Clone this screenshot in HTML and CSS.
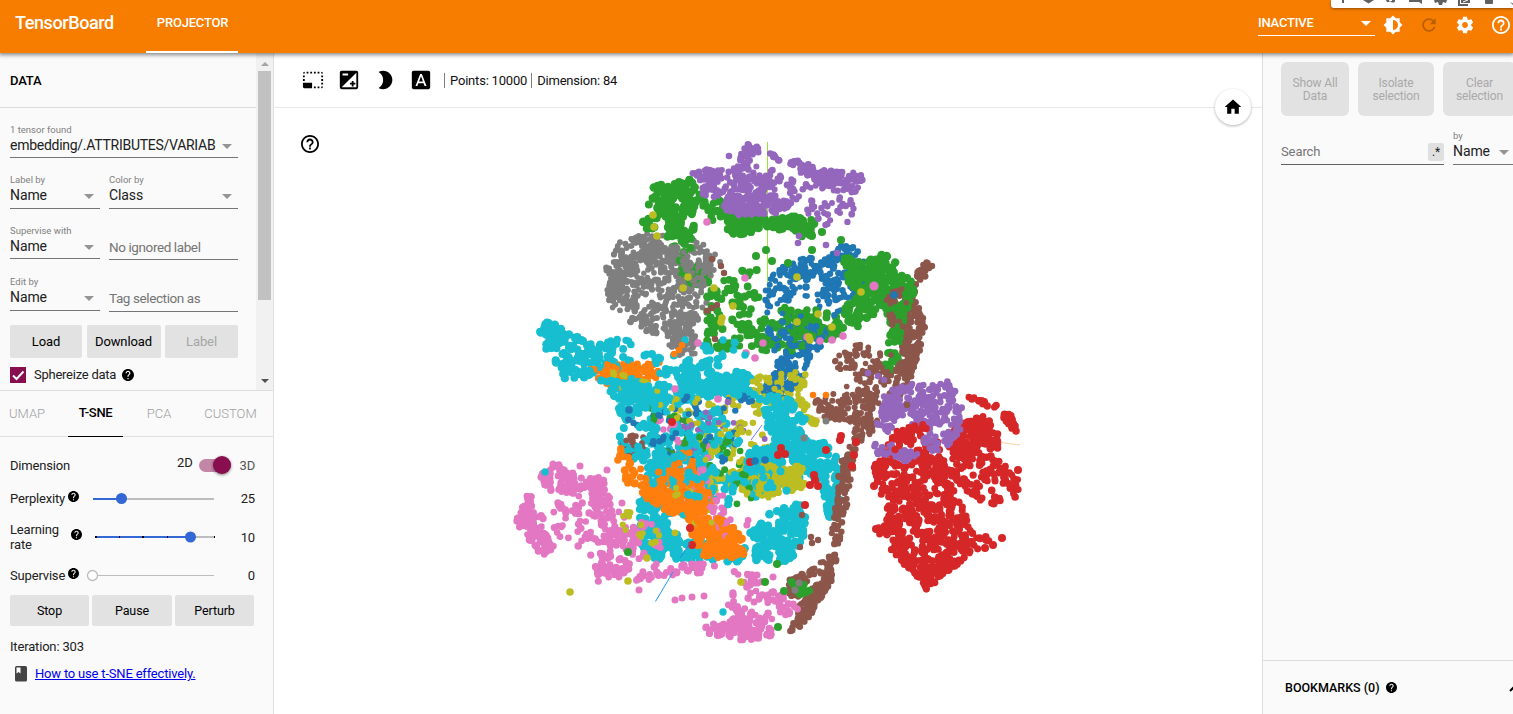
FILE: index.html
```html
<!DOCTYPE html>
<html lang="en">
<head>
<meta charset="utf-8">
<title>TensorBoard</title>
<link rel="stylesheet" href="styles.css">
</head>
<body>
<svg class="defs" width="0" height="0">
  <symbol id="help" viewBox="2 2 20 20"><path d="M12 2C6.48 2 2 6.48 2 12s4.48 10 10 10 10-4.48 10-10S17.52 2 12 2zm1 17h-2v-2h2v2zm2.07-7.75l-.9.92C13.45 12.9 13 13.5 13 15h-2v-.5c0-1.1.45-2.1 1.17-2.83l1.24-1.26c.37-.36.59-.86.59-1.41 0-1.1-.9-2-2-2s-2 .9-2 2H8c0-2.21 1.79-4 4-4s4 1.79 4 4c0 .88-.36 1.68-.93 2.25z"/></symbol>
  <symbol id="help-outline" viewBox="2 2 20 20"><path d="M11 18h2v-2h-2v2zm1-16C6.48 2 2 6.48 2 12s4.48 10 10 10 10-4.48 10-10S17.52 2 12 2zm0 18c-4.41 0-8-3.59-8-8s3.59-8 8-8 8 3.59 8 8-3.59 8-8 8zm0-14c-2.21 0-4 1.79-4 4h2c0-1.1.9-2 2-2s2 .9 2 2c0 2-3 1.75-3 5h2c0-2.25 3-2.5 3-5 0-2.21-1.79-4-4-4z"/></symbol>
</svg>
<header class="topbar">
  <div class="brand">TensorBoard</div>
  <div class="plugin">PROJECTOR</div>
  <div class="status"><span>INACTIVE</span><i class="caret"></i></div>
  <svg class="tb-icon" viewBox="0 0 24 24"><path d="M20 15.31L23.31 12 20 8.69V4h-4.69L12 .69 8.69 4H4v4.69L.69 12 4 15.31V20h4.69L12 23.31 15.31 20H20v-4.69zM12 18V6c3.31 0 6 2.69 6 6s-2.69 6-6 6z"/></svg>
  <svg class="tb-icon dim" viewBox="0 0 24 24"><path d="M17.65 6.35C16.2 4.9 14.21 4 12 4c-4.42 0-7.99 3.58-7.99 8s3.57 8 7.99 8c3.73 0 6.84-2.55 7.73-6h-2.08c-.82 2.33-3.04 4-5.65 4-3.31 0-6-2.69-6-6s2.69-6 6-6c1.66 0 3.14.69 4.22 1.78L13 11h7V4l-2.35 2.35z"/></svg>
  <svg class="tb-icon" viewBox="0 0 24 24"><path d="M19.43 12.98c.04-.32.07-.64.07-.98s-.03-.66-.07-.98l2.11-1.65c.19-.15.24-.42.12-.64l-2-3.46c-.12-.22-.39-.3-.61-.22l-2.49 1c-.52-.4-1.08-.73-1.69-.98l-.38-2.65C14.46 2.18 14.25 2 14 2h-4c-.25 0-.46.18-.49.42l-.38 2.65c-.61.25-1.17.59-1.69.98l-2.49-1c-.23-.09-.49 0-.61.22l-2 3.46c-.13.22-.07.49.12.64l2.11 1.65c-.04.32-.07.65-.07.98s.03.66.07.98l-2.11 1.65c-.19.15-.24.42-.12.64l2 3.46c.12.22.39.3.61.22l2.49-1c.52.4 1.08.73 1.69.98l.38 2.65c.03.24.24.42.49.42h4c.25 0 .46-.18.49-.42l.38-2.65c.61-.25 1.17-.59 1.69-.98l2.49 1c.23.09.49 0 .61-.22l2-3.46c.12-.22.07-.49-.12-.64l-2.11-1.65zM12 15.5c-1.93 0-3.5-1.57-3.5-3.5s1.57-3.5 3.5-3.5 3.5 1.57 3.5 3.5-1.57 3.5-3.5 3.5z"/></svg>
  <svg class="tb-icon help-top"><use href="#help-outline"/></svg>
</header>
<div class="popup"><svg width="182" height="8" fill="#606060">
  <path d="M11 0h2v3h-2zM32 0h11l-5.500 3.500zM55 0h3c0 1 1 1.500 2 1h1V0h3v1c0 2-4 2-5 0-1 2-4 1-4-1zM78 0h13v4l-3-2H78zM103 0h13l-1 3-3-1-1 3h-3l-1-3-3 1zM127 0h2v4h8v2h-10zM130 0h9v3h-9zM154 0h8v3q0 1-1 1h-6q-1 0-1-1z"/><path d="M132 2l5-2M181 4l2-2" stroke="#fff"/><path d="M179 2l4 2v2z"/></svg></div>
<main class="layout">
  <aside class="left">
    <section class="data">
      <div class="data-body">
        <h2>DATA</h2>
        <div class="fields">
          <div class="field r1"><label>1 tensor found</label><div class="value">embedding/.ATTRIBUTES/VARIAB<i class="caret"></i></div></div>
          <div class="pair r2">
            <div class="field"><label>Label by</label><div class="value">Name<i class="caret"></i></div></div>
            <div class="field wide"><label>Color by</label><div class="value">Class<i class="caret"></i></div></div>
          </div>
          <div class="pair r3">
            <div class="field"><label>Supervise with</label><div class="value">Name<i class="caret"></i></div></div>
            <div class="input">No ignored label</div>
          </div>
          <div class="pair r4">
            <div class="field"><label>Edit by</label><div class="value">Name<i class="caret"></i></div></div>
            <div class="input">Tag selection as</div>
          </div>
          <div class="buttons3"><div class="btn">Load</div><div class="btn">Download</div><div class="btn off">Label</div></div>
          <div class="check"><span class="box"><svg width="16" height="16"><path d="M3 8.500l3.500 3.500L13.500 4.500" fill="none" stroke="#fff" stroke-width="2"/></svg></span><span>Sphereize data</span><svg class="q"><use href="#help"/></svg></div>
        </div>
      </div>
      <div class="scrollbar"><i class="up"></i><div class="thumb"></div><i class="down"></i></div>
    </section>
    <nav class="tabs"><span class="t1">UMAP</span><span class="t2 on">T-SNE</span><span class="t3">PCA</span><span class="t4">CUSTOM</span></nav>
    <section class="tsne">
      <div class="row dim-row"><span class="name">Dimension</span><span class="d2">2D</span><span class="toggle"></span><span class="d3">3D</span></div>
      <div class="row r-perp"><span class="name">Perplexity</span><svg class="q"><use href="#help"/></svg>
        <svg class="slider" width="140" height="14"><path d="M10 8h121" stroke="#bdbdbd" stroke-width="2"/><path d="M10 8h28" stroke="#3367d6" stroke-width="2"/><circle cx="38.500" cy="7.500" r="5.500" fill="#3367d6"/></svg><b>25</b></div>
      <div class="row r-learn"><span class="name two">Learning<br>rate</span><svg class="q"><use href="#help"/></svg>
        <svg class="slider" width="140" height="14"><path d="M12 7h120" stroke="#bdbdbd" stroke-width="2"/><path d="M12 7h95" stroke="#3367d6" stroke-width="2"/><path d="M12 7h2M36 7h1M59 7h2M84 7h1M131 7h1" stroke="#000" stroke-width="2"/><circle cx="107.500" cy="7" r="5.500" fill="#3367d6"/></svg><b>10</b></div>
      <div class="row r-sup"><span class="name">Supervise</span><svg class="q"><use href="#help"/></svg>
        <svg class="slider" width="140" height="14"><path d="M10 7.500h121" stroke="#bdbdbd"/><circle cx="9.500" cy="7.500" r="5" fill="#fff" stroke="#bdbdbd" stroke-width="1.300"/></svg><b>0</b></div>
      <div class="run"><div class="btn">Stop</div><div class="btn">Pause</div><div class="btn">Perturb</div></div>
      <p class="iter">Iteration: 303</p>
      <div class="link"><svg width="12" height="16"><path fill="#444" d="M1.500 0h9Q12 0 12 1.500v12.500q0 1.500-1.500 1.500h-9Q0 15.500 0 14V1.500Q0 0 1.500 0z"/><path fill="#fff" d="M1.500 1.500h4v6l-2-1.500-2 1.500z"/></svg><a href="#">How to use t-SNE effectively.</a></div>
    </section>
  </aside>
  <section class="center">
    <div class="tools">
      <svg viewBox="0 0 24 24"><path d="M23 15h-2v2h2v-2zm0-4h-2v2h2v-2zm0 8h-2v2c1 0 2-1 2-2zM15 3h-2v2h2V3zm8 4h-2v2h2V7zm-2-4v2h2c0-1-1-2-2-2zM3 21h8v-6H1v4c0 1.100.9 2 2 2zM3 7H1v2h2V7zm12 12h-2v2h2v-2zm4-16h-2v2h2V3zm0 16h-2v2h2v-2zM3 3C2 3 1 4 1 5h2V3zm0 8H1v2h2v-2zm8-8H9v2h2V3zM7 3H5v2h2V3z"/></svg>
      <svg viewBox="0 0 24 24"><path d="M15 17v2h2v-2h2v-2h-2v-2h-2v2h-2v2h2zm5-15H4c-1.100 0-2 .9-2 2v16c0 1.100.9 2 2 2h16c1.100 0 2-.9 2-2V4c0-1.100-.9-2-2-2zM5 5h6v2H5V5zm15 15H4L20 4v16z"/></svg>
      <svg viewBox="0 0 24 24"><path d="M10 2c-1.820 0-3.530.5-5 1.350C7.990 5.080 10 8.300 10 12s-2.010 6.920-5 8.650C6.470 21.500 8.180 22 10 22c5.520 0 10-4.480 10-10S15.520 2 10 2z"/></svg>
      <svg viewBox="0 0 24 24"><path d="M9.930 13.500h4.140L12 7.980zM20 2H4c-1.100 0-2 .9-2 2v16c0 1.100.9 2 2 2h16c1.100 0 2-.9 2-2V4c0-1.100-.9-2-2-2zm-4.050 16.500l-1.140-3H9.170l-1.120 3H5.960l5.110-13h1.860l5.110 13h-2.090z"/></svg>
      <span class="stat">Points: 10000</span><span class="stat s2">Dimension: 84</span>
    </div>
    <div class="stage">
      <canvas id="plot" width="988" height="606"></canvas>
      <svg class="stage-help"><use href="#help-outline"/></svg>
      <div class="home"><svg width="20" height="20" viewBox="0 0 24 24"><path d="M10 20v-6h4v6h5v-8h3L12 3 2 12h3v8z"/></svg></div>
    </div>
  </section>
  <aside class="right">
    <div class="actions"><div class="act a1">Show All<br>Data</div><div class="act a2">Isolate<br>selection</div><div class="act a3">Clear<br>selection</div></div>
    <div class="search"><div class="query"><span>Search</span><span class="regex">.*</span></div><div class="field by"><label>by</label><div class="value">Name<i class="caret"></i></div></div></div>
    <div class="bookmarks"><span>BOOKMARKS (0)</span><svg class="q"><use href="#help"/></svg><svg class="chev" width="12" height="8"><path d="M1 7l5-5 5 5" fill="none" stroke="#000" stroke-width="2"/></svg></div>
  </aside>
</main>
<script src="plot.js"></script>
</body>
</html>
```
FILE: styles.css
```css
* { box-sizing: border-box; }
body { margin: 0; width: 1513px; height: 714px; overflow: hidden; font: 13px/16px Roboto, sans-serif; letter-spacing: -.1px; color: #212121; background: #fff; position: relative; }
.defs { position: absolute; }
h2, p { margin: 0; }
svg { flex: none; display: block; }
.topbar { height: 53px; background: #f77d00; color: #fff; display: flex; align-items: center; position: relative; z-index: 2; box-shadow: 0 1px 4px 1px rgba(0,0,0,.45); padding-left: 15px; }
.brand { font-size: 18px; font-weight: 500; letter-spacing: -.4px; width: 131px; padding-bottom: 7px; line-height: 20px; }
.plugin { width: 92px; height: 53px; border-bottom: 2px solid #fff; text-align: center; font-weight: 500; font-size: 13px; letter-spacing: -.2px; line-height: 46px; padding-left: 1px; }
.status { margin-left: 1020px; width: 117px; height: 24px; margin-top: -5px; border-bottom: 1px solid #fff; display: flex; justify-content: space-between; align-items: center; font-weight: 500; font-size: 13px; letter-spacing: -.2px; padding: 0 4px 2px 0; }
.caret { border: 5px solid transparent; border-top-color: #959595; border-bottom: 0; width: 0; height: 0; }
.status .caret { border-top-color: #fff; margin-top: 2px; }
.tb-icon { width: 20px; height: 20px; fill: #fff; margin: -4px 8px 0 7.500px; }
.tb-icon + .tb-icon { margin-left: 8px; }
.tb-icon.dim { fill: #b85e00; }
.topbar .help-top { width: 18px; height: 18px; margin-left: 9px; margin-right: 0; }
.popup { position: absolute; z-index: 3; right: 0; top: 0; width: 182px; height: 8px; background: #fff; border-radius: 0 0 0 3px; box-shadow: 0 1px 3px rgba(0,0,0,.4); }
.layout { display: flex; height: 661px; }
.left { width: 274px; background: #fafafa; border-right: 1px solid #e0e0e0; display: flex; flex-direction: column; }
.data { height: 338px; border-bottom: 1px solid #ddd; display: flex; }
.data-body { width: 256px; overflow: hidden; }
h2 { height: 55px; border-bottom: 1px solid #ddd; padding: 1px 0 0 10px; font-size: 13px; font-weight: 500; line-height: 54px; color: #000; letter-spacing: -.2px; }
.fields { padding: 16px 18px 0 10px; }
.field { border-bottom: 1px solid #757575; }
.field label { display: block; font-size: 9.500px; line-height: 12px; color: #808080; white-space: nowrap; letter-spacing: 0; }
.field .value { display: flex; justify-content: space-between; align-items: center; font-size: 14px; line-height: 18px; height: 19px; padding: 0 6px 2px 0; white-space: nowrap; }
.value .caret { margin-top: 3px; }
.r1 { height: 34px; }
.r1 .value { letter-spacing: -.27px; }
.pair { display: flex; gap: 9px; align-items: flex-start; }
.pair .field { width: 90px; }
.pair .wide { width: 129px; }
.r2 { margin-top: 16px; } .r2 .field { height: 35px; }
.r3 { margin-top: 16px; } .r3 .field { height: 34px; }
.r4 { margin-top: 16px; } .r4 .field { height: 35px; }
.input { width: 129px; height: 35px; border-bottom: 1px solid #757575; color: #757575; font-size: 13.500px; letter-spacing: -.4px; padding-top: 14px; }
.r4 .input { height: 36px; }
.btn { background: #e2e2e2; border-radius: 2px; color: #000; text-align: center; font-size: 13px; }
.buttons3 { display: grid; grid-template-columns: 72px 74px 73px; column-gap: 4.500px; margin-top: 13px; }
.buttons3 .btn { height: 33px; line-height: 33px; }
.btn.off { color: #a6a6a6; }
.check { display: flex; align-items: center; margin-top: 9px; height: 16px; white-space: nowrap; letter-spacing: -.25px; }
.box { width: 16px; height: 16px; background: #880e4f; margin-right: 8px; }
.q { width: 11px; height: 11px; fill: #000; }
.check .q { width: 12px; height: 12px; margin-left: 6px; }
.scrollbar { width: 17px; background: #f1f1f1; padding: 9px 2px 0; display: flex; flex-direction: column; align-items: center; }
.up { border: 4px solid transparent; border-top: 0; border-bottom-color: #a3a3a3; }
.thumb { width: 13px; height: 229px; background: #c1c1c1; margin: 5px 0 79px; }
.down { border: 4px solid transparent; border-bottom: 0; border-top-color: #505050; }
.tabs { height: 46px; border-bottom: 1px solid #e0e0e0; display: flex; line-height: 45px; color: #a0a0a0; font-weight: 300; letter-spacing: 0; }
.tabs span { text-align: center; }
.t1 { width: 54px; } .t2 { width: 55px; margin-left: 14px; } .t3 { width: 72px; } .t4 { width: 71px; }
.tabs .on { height: 46px; color: #000; font-weight: 500; border-bottom: 1px solid #000; letter-spacing: -.3px; line-height: 44px; }
.tsne { padding: 12px 18px 0 10px; }
.row { display: flex; align-items: center; letter-spacing: -.17px; }
.row b { font-weight: 400; margin-left: auto; padding-top: 1px; }
.dim-row { height: 33px; }
.dim-row .name { width: 60px; }
.d2 { margin-left: 107px; padding-bottom: 6px; width: 15px; }
.toggle { width: 32px; height: 13px; background: #c486a6; border-radius: 7px; margin-left: 7px; position: relative; }
.toggle::after { content: ""; position: absolute; right: 0; top: -3px; width: 18px; height: 18px; border-radius: 50%; background: #880e4f; box-shadow: 0 1px 3px rgba(0,0,0,.5); }
.d3 { margin-left: auto; color: #555; }
.r-perp { height: 32px; } .r-perp .q, .r-sup .q { margin: -3px 0 0 3px; }
.r-perp .name, .r-sup .name { width: 55px; padding-top: 1px; }
.slider { margin-left: 4px; }
.r-learn { height: 45px; } .r-learn .name { width: 61px; line-height: 15px; } .r-learn .q { margin-top: -4px; } .r-learn .slider { margin-left: 1px; }
.r-learn b { padding-top: 2px; }
.r-sup { height: 32px; }
.run { display: grid; grid-template-columns: 79px 80px 79px; column-gap: 3px; margin-top: 4px; }
.run .btn { height: 31px; line-height: 31px; font-size: 12.500px; }
.iter { margin-top: 13px; letter-spacing: -.17px; }
.link { display: flex; align-items: center; gap: 8px; margin: 11px 0 0 5px; height: 16px; }
a { color: #00e; white-space: nowrap; letter-spacing: -.19px; }
.center { width: 988px; display: flex; flex-direction: column; }
.tools { height: 55px; border-bottom: 1px solid #e8e8e8; display: flex; align-items: center; padding: 0 0 0 28px; }
.tools svg { width: 22px; height: 22px; margin-right: 14px; }
.stat { border-left: 1px solid #808080; line-height: 14px; padding: 1px 0 0 5px; letter-spacing: -.2px; margin-left: -2px; color: #111; white-space: nowrap; }
.tools .s2 { margin-left: 4px; }
.stage { flex: 1; position: relative; }
.stage canvas { display: block; }
.stage-help { position: absolute; left: 27px; top: 27px; width: 18px; height: 18px; }
.home { position: absolute; right: 11px; top: -19px; width: 36px; height: 36px; border-radius: 50%; background: #fff; box-shadow: 0 1px 3px rgba(0,0,0,.3); display: flex; align-items: center; justify-content: center; }
.right { width: 251px; border-left: 1px solid #ddd; background: #fafafa; display: flex; flex-direction: column; overflow: hidden; }
.actions { display: flex; gap: 9px; padding: 9px 0 0 18px; }
.act { flex: none; height: 54px; border-radius: 6px; background: #e2e2e2; color: #a9a9a9; font-size: 12px; line-height: 13px; text-align: center; padding-top: 15px; letter-spacing: -.15px; }
.a1 { width: 68px; } .a2 { width: 76px; } .a3 { width: 73px; }
.search { display: flex; align-items: flex-end; gap: 9px; margin: 12px 0 0 18px; height: 37px; }
.query { flex: none; width: 163px; height: 26px; border-bottom: 1px solid #616161; color: #757575; display: flex; justify-content: space-between; align-items: center; }
.regex { width: 16px; height: 18px; background: #e0e0e0; border-radius: 2px; color: #222; text-align: center; font-size: 12px; line-height: 18px; }
.by { width: 70px; height: 35px; flex: none; }
.by .value { padding-right: 14px; }
.bookmarks { margin-top: auto; height: 54px; border-top: 1px solid #ddd; display: flex; align-items: center; padding-left: 22px; font-size: 12.500px; color: #000; font-weight: 500; letter-spacing: 0; white-space: nowrap; }
.bookmarks span { flex: none; width: 95px; }
.bookmarks .q { margin-left: 6px; }
.chev { margin-left: 112px; }
```
FILE: plot.js
```js
const ctx = document.getElementById('plot').getContext('2d');
ctx.translate(-274, -108);
let seed = 8431;
function rnd() {
  seed = (seed * 1664525 + 1013904223) >>> 0;
  return seed / 4294967296;
}
const C = { p: '#9467bd', g: '#2ca02c', k: '#7f7f7f', b: '#1f77b4', t: '#8c564b', c: '#17becf', o: '#ff7f0e', m: '#e377c2', r: '#d62728', y: '#bcbd22' };
function inside(x, y, q) {
  let hit = false;
  for (let i = 0, j = q.length - 2; i < q.length; j = i, i += 2) {
    if ((q[i + 1] > y) !== (q[j + 1] > y) && x < (q[j] - q[i]) * (y - q[i + 1]) / (q[j + 1] - q[i + 1]) + q[i]) hit = !hit;
  }
  return hit;
}
function dot(c, x, y, r) {
  ctx.fillStyle = C[c];
  ctx.beginPath();
  ctx.arc(x, y, r, 0, 7);
  ctx.fill();
}
// Points scattered in a polygon, in short chains so that gaps stay between them.
function cloud(c, r, n, q) {
  const xs = q.filter((v, i) => i % 2 === 0), ys = q.filter((v, i) => i % 2);
  const x0 = Math.min(...xs), x1 = Math.max(...xs), y0 = Math.min(...ys), y1 = Math.max(...ys);
  const out = [];
  let guard = n * 60;
  while (out.length < n && guard-- > 0) {
    let x = x0 + rnd() * (x1 - x0), y = y0 + rnd() * (y1 - y0);
    if (!inside(x, y, q)) continue;
    const links = 1 + Math.floor(rnd() * 2.5);
    for (let k = 0; k < links && out.length < n; k++) {
      if (inside(x, y, q)) out.push([c, x, y, r * (0.9 + rnd() * 0.14)]);
      x += (rnd() - 0.5) * r * 3.2;
      y += (rnd() - 0.5) * r * 3.2;
    }
  }
  return out;
}
function paint(list) { list.forEach(d => dot(...d)); }
// Interleaves short runs of the overlapping clouds.
function mixed(defs) {
  const runs = [];
  defs.forEach(d => {
    const pts = cloud(...d);
    for (let i = 0; i < pts.length; i += 3) runs.push(pts.slice(i, i + 3));
  });
  for (let i = runs.length - 1; i > 0; i--) {
    const j = Math.floor(rnd() * (i + 1));
    [runs[i], runs[j]] = [runs[j], runs[i]];
  }
  runs.forEach(paint);
}
function line(color, x0, y0, x1, y1) {
  ctx.strokeStyle = color;
  ctx.lineWidth = 1;
  ctx.beginPath();
  ctx.moveTo(x0, y0);
  ctx.lineTo(x1, y1);
  ctx.stroke();
}
line('#9be53a', 767.5, 142, 767.5, 330);
line('#ffc0b4', 780, 412, 895, 429);
mixed([
  ['k', 3, 190, [640,234,665,231,662,255,635,275,616,300,607,298,605,270,618,243]],
  ['k', 3, 400, [640,250,680,245,695,270,690,300,702,320,680,332,650,334,622,322,606,300,615,275]],
  ['k', 3, 85, [680,236,700,238,722,262,716,278,700,290,714,300,704,312,690,312]],
  ['k', 3, 85, [660,325,690,320,697,338,697,355,680,358,665,342]],
  ['g', 4.2, 44, [665,235,685,232,693,260,705,265,712,282,692,285,680,280]]
]);
[
  ['g', 4.2, 130, [655,184,690,179,702,198,692,215,672,220,646,208]],
  ['g', 4.2, 52, [639,218,665,218,698,225,690,250,672,235,642,228]],
  ['g', 4, 40, [700,198,724,200,738,212,722,224,707,220]],
  ['g', 4.2, 90, [728,215,765,217,770,225,765,230,735,237,726,228]],
  ['g', 4.2, 68, [770,220,800,215,817,220,813,237,802,240,790,229,772,231]],
  ['p', 3.3, 100, [692,172,722,166,745,178,750,198,740,208,722,202,702,194]],
  ['p', 3.3, 55, [730,162,755,166,765,185,765,200,740,190]],
  ['p', 3.3, 150, [725,198,760,190,792,202,786,212,760,215,736,216,722,208]],
  ['p', 3.3, 28, [735,160,748,144,758,146,760,153,748,162]],
  ['p', 3.3, 9, [765,152,774,154,780,161,773,159]],
  ['p', 3.3, 85, [786,160,803,160,815,168,862,173,863,182,820,182,798,172]],
  ['p', 3.3, 34, [800,178,840,178,862,180,855,194,820,188,802,190]],
  ['p', 3.3, 50, [740,160,795,175,803,205,780,200,755,193]],
  ['p', 3.3, 32, [810,200,857,195,858,226,835,220,818,232,804,217]],
  ['g', 4, 55, [708,285,760,262,772,272,762,290,752,320,720,335,704,330]]
].forEach(d => paint(cloud(...d)));
mixed([
  ['g', 4, 125, [706,322,750,320,790,305,830,312,840,335,800,350,772,354,740,349,706,352]],
  ['b', 3.2, 160, [810,265,838,243,864,249,867,278,858,300,834,316,818,290]],
  ['b', 3, 85, [766,285,775,270,810,255,830,260,812,278,772,281,770,320,764,306]],
  ['b', 3, 55, [775,275,840,280,840,310,790,330,770,322]],
  ['g', 4, 26, [775,318,840,310,838,338,780,346]],
  ['b', 3.2, 220, [765,325,810,322,835,325,822,347,808,360,804,388,786,388,764,392,775,360]]
]);
[
  ['t', 3.4, 185, [924,262,932,262,930,272,920,284,913,295,926,322,920,350,912,377,896,383,900,345,905,300,910,280]],
  ['g', 4.3, 110, [868,260,884,253,904,266,915,288,910,308,891,318,875,300]],
  ['g', 4.3, 85, [870,270,885,285,880,310,860,328,840,332,835,318,855,295]],
  ['g', 4.3, 32, [838,256,868,252,865,278,850,290]],
  ['g', 4, 66, [884,308,908,295,902,340,899,360,888,376,884,368,891,330]],
  ['t', 3, 30, [885,295,905,285,910,350,900,372,889,366]]
].forEach(d => paint(cloud(...d)));
mixed([
  ['t', 3, 65, [828,362,860,342,880,350,882,370,855,378]],
  ['t', 3, 175, [814,402,842,386,870,388,880,410,875,434,858,444,850,422,820,418]],
  ['t', 3, 85, [850,370,900,360,914,378,900,400,870,408]]
]);
mixed([
  ['c', 4.2, 105, [535,333,546,321,570,331,586,343,607,345,597,365,580,362,570,375,553,360]],
  ['c', 4.2, 48, [560,362,605,350,622,368,620,390,593,375,572,395,562,374]],
  ['c', 4, 26, [603,334,628,340,637,354,628,370,604,366]],
  ['o', 3.4, 140, [590,369,612,361,657,364,662,376,645,384,625,394,604,387]],
  ['o', 3.3, 30, [635,369,665,360,648,390,641,413,633,390]]
]);
mixed([
  ['c', 4.2, 85, [600,380,640,378,662,400,660,414,640,412,616,398]],
  ['c', 4.2, 350, [618,404,658,380,700,400,730,415,740,440,720,470,715,500,674,505,655,560,642,550,635,515,643,470,618,450]],
  ['c', 4.3, 150, [670,374,730,370,751,372,757,400,720,394,680,402]],
  ['c', 4, 46, [640,352,690,350,720,340,747,343,727,367,665,380]],
  ['b', 3.2, 70, [610,397,660,395,735,400,750,470,680,480,640,440]],
  ['g', 3.5, 80, [640,400,720,430,770,450,780,490,720,510,680,520,665,460]],
  ['y', 3.1, 85, [752,377,804,370,812,395,795,405,745,403]],
  ['y', 3.1, 32, [793,398,805,400,820,420,815,427,806,420]],
  ['y', 3.2, 125, [655,395,760,395,775,430,780,500,690,490,700,430,650,415]],
  ['b', 3.1, 42, [700,385,800,380,800,408,740,402]],
  ['p', 3, 32, [640,400,720,415,800,405,790,445,730,450,700,470]],
  ['t', 3, 35, [618,435,640,431,647,442,638,456,619,459]],
  ['m', 3.4, 62, [645,400,715,440,725,507,760,520,725,545,695,525,690,480]],
  ['y', 3.2, 50, [680,475,710,420,775,420,765,470,730,510,680,520]],
  ['y', 3.2, 16, [610,368,663,388,690,410,657,410,625,400]],
  ['c', 4.2, 75, [702,485,720,475,767,465,806,475,765,495,729,505]],
  ['c', 4.3, 120, [640,520,674,532,700,537,743,540,750,562,720,562,690,560,653,561]]
]);
mixed([
  ['o', 3.8, 110, [615,445,629,449,650,480,675,495,710,500,699,520,668,512,638,494,621,476]],
  ['o', 3.5, 120, [644,469,690,450,698,476,716,501,700,526,665,500]],
  ['o', 4.1, 130, [687,517,721,517,742,535,747,554,730,560,705,558,694,541]],
  ['c', 4, 45, [640,450,700,455,710,500,690,520,660,505]],
  ['m', 3.4, 22, [670,490,715,480,745,530,725,550,695,525]],
  ['y', 3.2, 16, [660,480,700,470,720,520,690,530]]
]);
[
  ['c', 4.3, 125, [758,398,785,394,806,420,808,448,784,449,766,430]],
  ['c', 4.3, 75, [745,450,790,440,810,455,800,470,745,475]],
  ['c', 4.3, 140, [784,449,822,440,838,455,843,480,840,508,829,522,822,482,800,470]],
  ['c', 4.3, 100, [773,512,802,502,807,515,802,547,790,560,778,547,748,535,760,520]],
  ['c', 4.3, 45, [754,545,792,545,794,562,756,560]],
  ['y', 4, 75, [764,465,802,465,805,487,785,494,756,497]],
  ['c', 4, 9, [760,465,805,465,800,495,760,495]],
  ['t', 3.3, 120, [840,460,850,440,861,434,852,474,846,511,840,545,834,570,828,560,834,515]],
  ['t', 3.4, 125, [824,572,832,562,833,579,818,605,803,625,790,632,800,605]],
  ['t', 3.2, 55, [789,580,827,558,832,572,810,575,798,604,788,594]],
  ['m', 3.6, 115, [540,475,555,463,571,471,580,478,607,476,602,489,580,493,560,494,545,490]],
  ['m', 3.6, 80, [516,513,530,500,538,528,557,543,547,558,529,545,516,530]],
  ['m', 3.6, 110, [525,495,570,490,610,490,635,518,668,530,658,566,625,583,603,588,582,562,545,547]],
  ['m', 3.6, 130, [587,480,609,485,616,525,647,525,640,540,627,571,610,584,592,580,606,555,600,525,589,515]],
  ['m', 3.6, 45, [620,568,647,572,690,563,717,565,709,572,665,577,638,582]],
  ['m', 3.6, 115, [701,627,730,619,748,617,771,624,773,638,750,642,728,638,710,634]],
  ['m', 3.6, 60, [722,595,744,590,775,590,800,602,814,596,811,608,782,618,762,624,736,618]],
  ['m', 3.6, 14, [718,570,780,568,767,590,729,590]],
  ['g', 3.8, 16, [790,580,806,584,812,592,800,597]],
  ['y', 3.3, 16, [593,475,630,510,650,530,680,530,647,550,620,525]],
  ['r', 3.7, 34, [963,396,980,398,1012,412,1019,434,1010,430,998,412]],
  ['r', 3.7, 165, [955,425,985,415,998,428,998,448,965,457,945,450]],
  ['r', 3.7, 85, [893,432,915,424,940,440,942,470,875,464,866,453]],
  ['r', 3.7, 530, [872,456,890,464,940,455,957,474,952,490,966,510,972,533,998,540,970,555,928,585,911,570,893,555,877,530,887,510,876,480]],
  ['r', 3.7, 60, [903,560,955,552,965,558,926,590,918,580]],
  ['r', 3.7, 120, [950,450,985,450,1018,476,1020,504,1010,492,998,504,990,504,967,497,950,490]],
  ['p', 3.4, 260, [883,395,903,384,955,380,963,410,962,430,944,451,920,453,925,430,900,420,883,417]],
  ['p', 3.2, 40, [872,398,890,402,900,420,888,442,875,425]],
  ['p', 3.4, 38, [871,443,895,444,923,452,905,461,878,454]],
  ['r', 3.6, 32, [891,435,920,422,930,430,921,445,895,450]]
].forEach(d => paint(cloud(...d)));
[
  'm 3.8 707 222 698 343 745 278 807 337 820 341 832 340 843 336 755 358 763 343 746 353 675 389 718 399',
  'm 4.6 874 286',
  'm 3.5 553 464 580 466 607 470 608 496 622 503 639 590 675 600 682 598 692 597 704 596 705 615 757 575 773 577 754 602',
  'r 4 672 422 692 545 690 528 750 462 778 455 781 448 785 454 805 505 815 480 810 485 818 486 814 475 826 450 841 436 856 442 854 455 852 466 874 486 876 529 840 440 1002 538 993 545 985 548 1018 470',
  'y 3.8 654 227 653 215 657 236 688 277 714 288 683 288 733 306 722 318 721 322 797 277 818 314 861 292 797 322 832 327 809 337 810 340 570 592 741 582 628 581 647 558',
  'g 4 766 250 756 256 772 261 788 263 812 250 822 232 841 240 718 348 765 582 778 627 777 564 784 591 628 552',
  'c 3.7 545 472 723 612 628 360 685 340 710 360 723 340 707 346 745 355',
  'p 3.3 729 156 798 243 837 253 799 236 826 245 728 402 868 373 878 376 884 380',
  'b 3.8 629 410 894 295 806 287 788 300 786 290 755 461 765 460',
  'o 3.3 813 395 826 395 679 350 682 345 674 354',
  't 3.2 712 259 721 266 724 273 712 308 717 305 707 311 715 339 802 515 811 537 800 547 818 540 812 543 921 270 926 266 929 268 932 266 907 405',
  'k 3.5 826 421 795 590 799 583 804 438'
].forEach(s => {
  const v = s.split(' ');
  for (let i = 2; i < v.length; i += 2) dot(v[0], +v[i], +v[i + 1], +v[1]);
});
line('#2196f3', 655.5, 601.5, 673, 572);
line('#2f86e8', 680, 558, 690, 543);
line('#6a7cff', 751, 440, 762, 425);
line('#ffcfa0', 1001, 442.500, 1020, 445);
```
